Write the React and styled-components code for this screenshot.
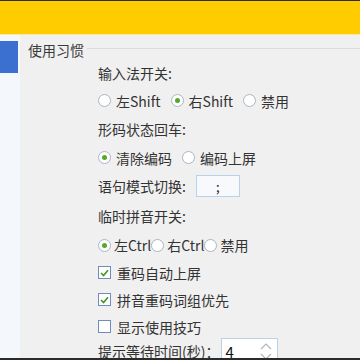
import React from "react";
import styled, { createGlobalStyle } from "styled-components";

const GlobalStyle = createGlobalStyle`
  html, body { margin: 0; padding: 0; }
  body {
    font-family: "Noto Sans CJK SC", "Noto Sans", sans-serif;
    background: #f0f0f0;
  }
`;

const Window = styled.div`
  width: 360px;
  height: 360px;
  display: flex;
  flex-direction: column;
  overflow: hidden;
  border-top: 1px solid #2b2b2b;
  border-bottom: 2px solid #2b2b2b;
  box-sizing: border-box;
  background: #f0f0f0;
`;

const TitleBar = styled.div`
  height: 33px;
  flex-shrink: 0;
  background: #ffcc00;
  border-bottom: 1px solid #fde79a;
`;

const Body = styled.div`
  flex: 1;
  display: flex;
  min-height: 0;
`;

const Sidebar = styled.div`
  width: 20px;
  flex-shrink: 0;
  background: #f4f7fb;
  padding-top: 6px;
`;

const SideItem = styled.div`
  height: 32px;
  width: 18px;
  background: ${(p) => (p.$active ? "#3b70d1" : "transparent")};
`;

const Content = styled.div`
  flex: 1;
  padding: 5px 0 0 8px;
  display: flex;
  flex-direction: column;
`;

const GroupHead = styled.div`
  display: flex;
  align-items: center;
  height: 20px;
  font-size: 14px;
  color: #3a3a3a;
  gap: 3px;
`;

const GroupLine = styled.div`
  flex: 1;
  border-top: 1px solid #dcdcdc;
  margin-top: -4px;
`;

const Settings = styled.div`
  display: flex;
  flex-direction: column;
  padding-left: 70px;
  margin-top: -1px;
`;

const Row = styled.div`
  height: ${(p) => p.$h || 27}px;
  flex-shrink: 0;
  display: flex;
  align-items: center;
  font-size: 14px;
  color: #333;
  white-space: nowrap;
`;

const Option = styled.label`
  display: flex;
  align-items: center;
  margin-right: ${(p) => (p.$tight ? 0 : 10)}px;
`;

const RadioDot = styled.span`
  width: 11px;
  height: 11px;
  border-radius: 50%;
  border: 1px solid #a9b6c6;
  background: #fff;
  margin-right: ${(p) => (p.$tight ? 3 : 5)}px;
  display: flex;
  align-items: center;
  justify-content: center;
  flex-shrink: 0;
  &::after {
    content: "";
    width: 5px;
    height: 5px;
    border-radius: 50%;
    background: ${(p) => (p.$checked ? "#55a82a" : "transparent")};
  }
`;

const CheckBox = styled.span`
  width: 11px;
  height: 11px;
  border: 1px solid #6f8db8;
  background: #fff;
  margin-right: 6px;
  display: flex;
  align-items: center;
  justify-content: center;
  flex-shrink: 0;
`;

const TextBox = styled.div`
  width: 42px;
  height: 20px;
  margin-left: 10px;
  border: 1px solid #b7d3ec;
  background: #f7f9fc;
  display: flex;
  align-items: center;
  justify-content: center;
  font-size: 13px;
  color: #222;
`;

const SpinBox = styled.div`
  width: 57px;
  height: 26px;
  flex-shrink: 0;
  margin-left: 2px;
  border: 1px solid #b7d3ec;
  background: #fff;
  display: flex;
  align-items: center;
  box-sizing: border-box;
  padding-left: 3px;
  padding-right: 4px;
  font-size: 15px;
  color: #111;
`;

const SpinValue = styled.span`
  flex: 1;
`;

const SpinArrows = styled.div`
  width: 14px;
  display: flex;
  flex-direction: column;
  align-items: center;
  gap: 3px;
`;

function Radio({ checked, tight, children }) {
  return (
    <Option $tight={tight}>
      <RadioDot $checked={checked} $tight={tight} />
      {children}
    </Option>
  );
}

function Check({ checked, children }) {
  return (
    <Option>
      <CheckBox>
        {checked && (
          <svg width="9" height="8" viewBox="0 0 9 8">
            <path d="M1 4 L3.5 6.5 L8 1.2" fill="none" stroke="#3d9a1c" strokeWidth="1.6" />
          </svg>
        )}
      </CheckBox>
      {children}
    </Option>
  );
}

function Chevron({ up }) {
  return (
    <svg width="12" height="7" viewBox="0 0 12 7">
      <path
        d={up ? "M1 6 L6 1 L11 6" : "M1 1 L6 6 L11 1"}
        fill="none"
        stroke="#b5b5b5"
        strokeWidth="1.2"
      />
    </svg>
  );
}

export default function App() {
  return (
    <>
      <GlobalStyle />
      <Window>
        <TitleBar />
        <Body>
          <Sidebar>
            <SideItem $active />
          </Sidebar>
          <Content>
            <GroupHead>
              使用习惯
              <GroupLine />
            </GroupHead>
            <Settings>
              <Row $h={28}>输入法开关:</Row>
              <Row>
                <Radio>左Shift</Radio>
                <Radio checked>右Shift</Radio>
                <Radio>禁用</Radio>
              </Row>
              <Row $h={30}>形码状态回车:</Row>
              <Row>
                <Radio checked>清除编码</Radio>
                <Radio>编码上屏</Radio>
              </Row>
              <Row $h={30}>
                语句模式切换:
                <TextBox>;</TextBox>
              </Row>
              <Row $h={30}>临时拼音开关:</Row>
              <Row $h={28}>
                <Radio checked tight>左Ctrl</Radio>
                <Radio tight>右Ctrl</Radio>
                <Radio tight>禁用</Radio>
              </Row>
              <Row>
                <Check checked>重码自动上屏</Check>
              </Row>
              <Row>
                <Check checked>拼音重码词组优先</Check>
              </Row>
              <Row>
                <Check>显示使用技巧</Check>
              </Row>
              <Row $h={22}>
                提示等待时间(秒)：
                <SpinBox>
                  <SpinValue>4</SpinValue>
                  <SpinArrows>
                    <Chevron up />
                    <Chevron />
                  </SpinArrows>
                </SpinBox>
              </Row>
            </Settings>
          </Content>
        </Body>
      </Window>
    </>
  );
}
